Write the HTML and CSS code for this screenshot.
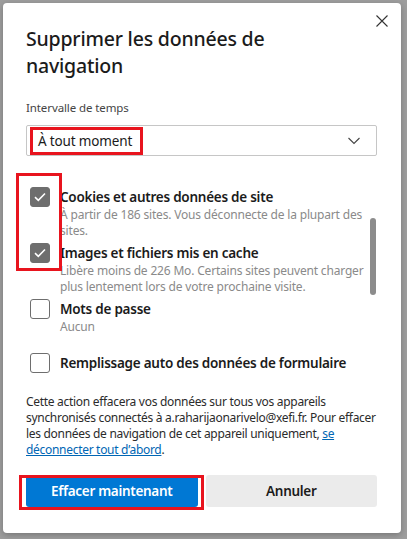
FILE: index.html
```html
<!DOCTYPE html>
<html lang="fr">
<head>
    <meta charset="UTF-8">
    <meta name="viewport" content="width=device-width, initial-scale=1.0">
    <title>Supprimer les données de navigation</title>
    <link rel="stylesheet" href="styles.css">
</head>
<body>
    <div class="dialog">
        <div class="header">
            <h1 class="title">Supprimer les données de navigation</h1>
            <button class="close" aria-label="Fermer">
                <svg width="12" height="12" viewBox="0 0 12 12">
                    <path d="M0.5 0.5 L11.5 11.5 M11.5 0.5 L0.5 11.5" stroke="#333" stroke-width="1.1" fill="none"/>
                </svg>
            </button>
        </div>

        <label class="field-label">Intervalle de temps</label>
        <div class="select">
            <span class="select-value">À tout moment</span>
            <svg width="12" height="8" viewBox="0 0 12 8">
                <path d="M0.5 1 L6 6.5 L11.5 1" stroke="#444" stroke-width="1.1" fill="none"/>
            </svg>
            <span class="mark mark-select"></span>
        </div>

        <div class="list">
            <div class="items">
                <div class="item">
                    <span class="box checked">
                        <svg width="12" height="10" viewBox="0 0 12 10"><path d="M1 5.2 L4.3 8.3 L11 1.5" stroke="#fff" stroke-width="1.6" fill="none"/></svg>
                    </span>
                    <div class="item-text">
                        <div class="item-label">Cookies et autres données de site</div>
                        <div class="item-desc">À partir de 186 sites. Vous déconnecte de la plupart des sites.</div>
                    </div>
                </div>
                <div class="item">
                    <span class="box checked">
                        <svg width="12" height="10" viewBox="0 0 12 10"><path d="M1 5.2 L4.3 8.3 L11 1.5" stroke="#fff" stroke-width="1.6" fill="none"/></svg>
                    </span>
                    <div class="item-text">
                        <div class="item-label">Images et fichiers mis en cache</div>
                        <div class="item-desc">Libère moins de 226 Mo. Certains sites peuvent charger plus lentement lors de votre prochaine visite.</div>
                    </div>
                </div>
                <div class="item">
                    <span class="box"></span>
                    <div class="item-text">
                        <div class="item-label">Mots de passe</div>
                        <div class="item-desc">Aucun</div>
                    </div>
                </div>
                <div class="item item-last">
                    <span class="box"></span>
                    <div class="item-text">
                        <div class="item-label">Remplissage auto des données de formulaire</div>
                    </div>
                </div>
            </div>
            <div class="scrollbar"><div class="thumb"></div></div>
            <span class="mark mark-boxes"></span>
        </div>

        <p class="note">
            Cette action effacera vos données sur tous vos appareils synchronisés connectés à a.raharijaonarivelo@xefi.fr. Pour effacer les données de navigation de cet appareil uniquement, <a href="#">se déconnecter tout d’abord</a>.
        </p>

        <div class="actions">
            <button class="btn btn-primary">Effacer maintenant<span class="mark mark-button"></span></button>
            <button class="btn btn-secondary">Annuler</button>
        </div>
    </div>
</body>
</html>
```

FILE: styles.css
```css
body {
    margin: 0;
    background: #9e9e9e;
    font-family: "Segoe UI", "Noto Sans", sans-serif;
    color: #1b1b1b;
    width: 407px;
    height: 539px;
    overflow: hidden;
}

.dialog {
    position: relative;
    margin: 3px 0 0 3px;
    width: 398px;
    height: 530px;
    box-sizing: border-box;
    padding: 6px 24px 0 23px;
    background: #fff;
    border-radius: 4px;
    box-shadow: 0 2px 6px rgba(0, 0, 0, 0.25);
}

.header {
    display: flex;
    align-items: flex-start;
}

.title {
    flex: 1;
    margin: 16px 0 0 0;
    font-size: 19.5px;
    line-height: 27px;
    font-weight: 500;
    letter-spacing: -0.2px;
    color: #1b1b1b;
    padding-right: 40px;
}

.close {
    width: 24px;
    height: 24px;
    margin-right: -17px;
    padding: 0;
    border: none;
    background: none;
    display: flex;
    align-items: center;
    justify-content: center;
}

.field-label {
    display: block;
    margin-top: 21px;
    font-size: 11.5px;
    line-height: 16px;
    letter-spacing: -0.1px;
    color: #444;
}

.select {
    position: relative;
    margin-top: 9px;
    height: 31px;
    box-sizing: border-box;
    border: 1px solid #c6c6c6;
    border-radius: 2px;
    display: flex;
    align-items: center;
    justify-content: space-between;
    padding: 0 16px 0 11px;
}

.select-value {
    font-size: 13.5px;
    letter-spacing: -0.15px;
    color: #1b1b1b;
}

/* red annotation boxes */
.mark {
    position: absolute;
    border: 3px solid #e8141e;
    box-sizing: border-box;
    pointer-events: none;
}

.mark-select {
    left: 3px;
    top: 1px;
    width: 113px;
    height: 28px;
}

.mark-boxes {
    left: -10px;
    top: 3px;
    width: 46px;
    height: 98px;
}

.mark-button {
    left: -7px;
    top: 0;
    width: 185px;
    height: 35px;
}

.list {
    position: relative;
    margin-top: 14px;
    display: flex;
}

.items {
    flex: 1;
    height: 208px;
    box-sizing: border-box;
    padding-top: 17px;
    overflow: hidden;
}

.item {
    display: flex;
    margin-bottom: 4px;
}

.item-last {
    margin-top: 18px;
}

.box {
    flex: none;
    width: 20px;
    height: 20px;
    box-sizing: border-box;
    border: 1px solid #6e6e6e;
    border-radius: 3px;
    margin: 0 10px 0 4px;
    display: flex;
    align-items: center;
    justify-content: center;
}

.box.checked {
    background: #6e6e6e;
}

.item-label {
    font-size: 13.5px;
    line-height: 20px;
    font-weight: 600;
    letter-spacing: -0.25px;
    color: #1b1b1b;
    white-space: nowrap;
}

.item-desc {
    font-size: 12px;
    line-height: 16px;
    letter-spacing: -0.18px;
    color: #8a8a8a;
    padding-right: 6px;
}

.scrollbar {
    width: 6px;
    margin-right: 1px;
}

.thumb {
    margin-top: 48px;
    height: 77px;
    background: #8c8c8c;
    border-radius: 3px;
}

.note {
    margin: 16px 0 0 0;
    font-size: 12px;
    line-height: 16px;
    letter-spacing: -0.3px;
    color: #2b2b2b;
}

.note a {
    color: #0066b4;
    text-decoration: underline;
}

.actions {
    display: flex;
    gap: 8px;
    margin-top: 17px;
}

.btn {
    position: relative;
    flex: 1;
    height: 32px;
    border: none;
    border-radius: 3px;
    font-family: inherit;
    font-size: 13.5px;
    font-weight: 600;
    letter-spacing: -0.3px;
}

.btn-primary {
    background: #0078d4;
    color: #fff;
}

.btn-secondary {
    background: #ebebeb;
    color: #1b1b1b;
}
```
